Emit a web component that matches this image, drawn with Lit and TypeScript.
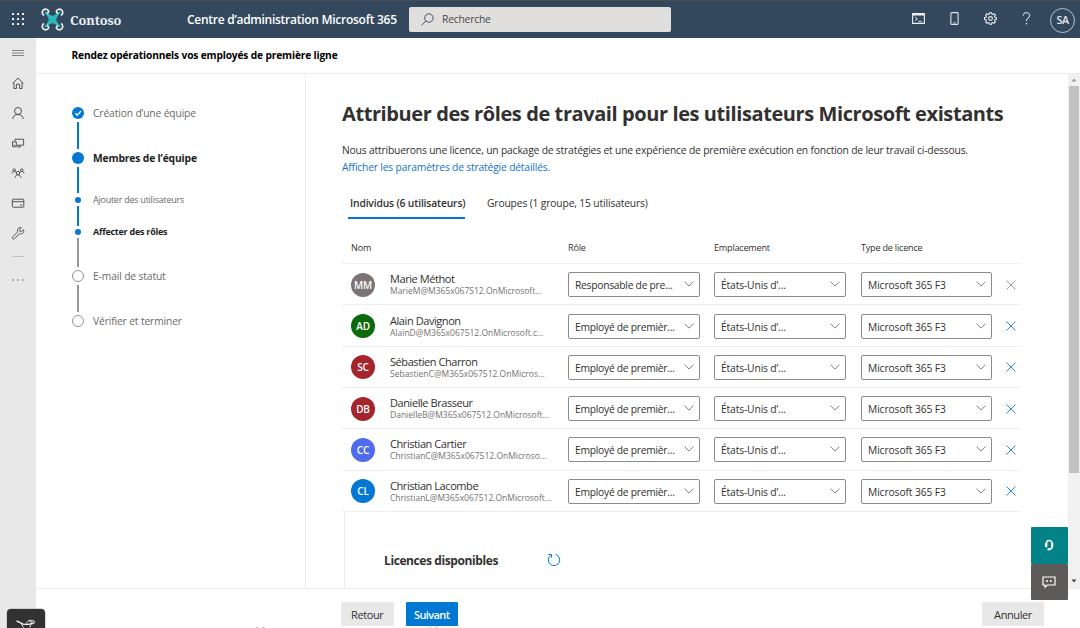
import { LitElement, html, css, svg } from "lit";
import { customElement, property } from "lit/decorators.js";
import { classMap } from "lit/directives/class-map.js";

const chevron = svg`<svg class="chev" viewBox="0 0 10 6" width="10" height="6"><path d="M.5.6 5 5.1 9.5.6" fill="none" stroke="#6b6b6b" stroke-width=".85"/></svg>`;

@customElement("select-box")
class SelectBox extends LitElement {
  @property() label = "";
  static styles = css`
    :host { display: block; }
    .box { box-sizing: border-box; height: 25px; border: 1px solid #8d8b8a; border-radius: 2px; background: #fff;
      display: flex; align-items: center; justify-content: space-between; padding: 1px 5px 0 6px; }
    .label { font-size: 10.3px; color: #323130; white-space: nowrap; letter-spacing: var(--ls, -0.27px); }
    .chev { display: block; margin-top: -2px; flex: none; }
  `;
  render() {
    return html`<div class="box"><span class="label">${this.label}</span>${chevron}</div>`;
  }
}

@customElement("top-bar")
class TopBar extends LitElement {
  static styles = css`
    :host { display: block; }
    .bar { box-sizing: border-box; height: 38px; background: #33485d; border-top: 1px solid #4b4f54; display: flex; align-items: center; color: #fff; padding-right: 5px; }
    .waffle { margin-left: 12px; margin-top: -1px; }
    .logo { margin-left: 17px; }
    svg { display: block; flex: none; }
    .brand { width: 123px; box-sizing: border-box; padding-left: 6px; font-family: "Roboto Slab", "Noto Serif", "DejaVu Serif", serif; font-weight: 700; font-size: 12.8px; color: #e9edf1; letter-spacing: -0.1px; white-space: nowrap; }
    .product { width: 222px; font-size: 12px; font-weight: 600; letter-spacing: -0.27px; white-space: nowrap; }
    .search { box-sizing: border-box; width: 262px; height: 25px; background: #e1dfdd; border-radius: 2px; display: flex; align-items: center; color: #444a50; font-size: 10.3px; letter-spacing: -0.2px; padding-left: 12px; gap: 8px; margin-top: -1px; }
    .actions { margin-left: auto; display: flex; align-items: center; }
    .act { width: 36px; display: flex; justify-content: center; margin-top: -2px; }
    .me { box-sizing: border-box; width: 25px; height: 25px; border: 1px solid #b9c3cc; border-radius: 50%; margin-left: 5.5px; font-size: 10.6px; letter-spacing: -0.3px; font-weight: 600; display: flex; align-items: center; justify-content: center; color: #e6eaee; margin-top: 1px; }
  `;
  render() {
    const dots = [0, 5, 10];
    return html`<header class="bar">
      <svg class="waffle" width="12" height="13" viewBox="0 0 12 13">
        ${dots.map((y) => dots.map((x) => svg`<rect x=${x} y=${y} width="2" height="2" rx=".5" fill="#fff"/>`))}
      </svg>
      <svg class="logo" width="23" height="23" viewBox="0 0 23 23">
        <path d="M3.500 4.500 4.500 3.500 9.200 7Q11.500 8.300 13.800 7L18.500 3.500 19.500 4.500 16 9.200Q14.700 11.500 16 13.800L19.500 18.500 18.500 19.500 13.800 16Q11.500 14.700 9.200 16L4.500 19.500 3.500 18.500 7 13.800Q8.300 11.500 7 9.200Z" fill="#2bb9bd"/>
        <g fill="none" stroke="#e8edf1" stroke-width="1.700">
          <path d="M3 7.400A3.300 3.300 0 1 1 7.600 3.200Q7.700 4.600 6.200 5.600"/>
          <path d="M20 7.400A3.300 3.300 0 1 0 15.400 3.200Q15.300 4.600 16.800 5.600"/>
          <path d="M3 15.600A3.300 3.300 0 1 0 7.600 19.800Q7.700 18.400 6.200 17.400"/>
          <path d="M20 15.600A3.300 3.300 0 1 1 15.400 19.800Q15.300 18.400 16.800 17.400"/>
        </g>
      </svg>
      <span class="brand">Contoso</span>
      <span class="product">Centre d’administration Microsoft 365</span>
      <div class="search">
        <svg width="13" height="13" viewBox="0 0 13 13"><g fill="none" stroke="#41536a" stroke-width="1"><circle cx="7.9" cy="5" r="4.2"/><path d="M4.9 8 .5 12.4"/></g></svg>
        <span>Recherche</span>
      </div>
      <div class="actions">
        <span class="act"><svg width="13" height="11" viewBox="0 0 13 11"><path d="M.6.6H12.4V10.4H.6ZM.6 1.9H12.4" fill="none" stroke="#eef1f3" stroke-width="1.1"/><path d="M3.2 4 5.4 5.8 3.2 7.6M6.5 8.4H9.6" fill="none" stroke="#fff" stroke-width=".9"/></svg></span>
        <span class="act"><svg width="9" height="13" viewBox="0 0 9 13"><rect x=".9" y=".6" width="7.2" height="11.8" rx=".6" fill="none" stroke="#dde4e9" stroke-width="1.1"/><path d="M3.4 10.8H5.6" stroke="#dde4e9"/></svg></span>
        <span class="act"><svg width="13" height="13" viewBox="0 0 13 13"><g fill="none" stroke="#e8edf1" stroke-width="1.100"><path d="M5.5.7h2l.3 1.4 1 .4 1.2-.8 1.4 1.4-.8 1.2.4 1 1.3.2v2l-1.3.2-.4 1 .8 1.2-1.4 1.4-1.2-.8-1 .4-.3 1.4h-2l-.3-1.4-1-.4-1.2.8L1.600 9.900l.8-1.200-.4-1L.6 7.500v-2L2 5.300l.4-1-.8-1.200L3 1.700l1.200.8 1-.4Z"/><circle cx="6.5" cy="6.500" r="1.900"/></g></svg></span>
        <span class="act"><svg width="9" height="13" viewBox="0 0 9 13"><path d="M1.200 3.600C1.200 1.800 2.500.7 4.400.7S7.700 1.800 7.700 3.400C7.700 5.900 4.500 6 4.500 9.200" fill="none" stroke="#fff" stroke-width="1"/><circle cx="4.500" cy="11.700" r=".8" fill="#fff"/></svg></span>
        <span class="me">SA</span>
      </div>
    </header>`;
  }
}

@customElement("nav-rail")
class NavRail extends LitElement {
  static styles = css`
    :host { display: block; }
    .rail { box-sizing: border-box; width: 36px; height: 100%; background: #e8e8e8; display: flex; flex-direction: column; align-items: center; }
    .item { height: 30px; display: flex; align-items: center; justify-content: center; }
    .gap { height: 1px; width: 12px; background: #c4c4c4; margin-top: 8px; }
    .more { padding-top: 7px; }
    svg { display: block; overflow: visible; }
  `;
  render() {
    const icons = [
      svg`<path d="M0 3.500H12M0 6H12M0 8.500H12" stroke="#777" stroke-width=".9"/>`,
      svg`<path d="M.6 6.500 6 1 11.400 6.500M1.900 5.500V11.500H4.400V7.200H7.600V11.500H10.100V5.500"/>`,
      svg`<circle cx="6" cy="4" r="3.500"/><path d="M.7 12C.9 9.200 3 7.500 6 7.500S11.100 9.200 11.300 12"/>`,
      svg`<path d="M3 4V2.200H11.600V8.200H5.200M.5 4.800H4.300V9.700H.5ZM7 8.300V9.800M5.200 9.900H9M1.600 8.300H3.200"/>`,
      svg`<circle cx="6" cy="6" r="1.700"/><circle cx="2.200" cy="3.200" r="1.300"/><circle cx="9.800" cy="3.200" r="1.300"/><path d="M3.100 10.800C3.300 8.600 4.400 7.800 6 7.800S8.700 8.600 8.900 10.800M0 6.500C.2 5 1 4.500 2.200 4.500S4 5 4.300 5.700M12 6.500C11.800 5 11 4.500 9.800 4.500S8 5 7.700 5.700"/>`,
      svg`<rect x=".4" y="2.200" width="11.400" height="8" rx=".8"/><path d="M.4 4.700H11.800M8 8H10.200"/>`,
      svg`<path d="M11.300 2.700 9.500 4.500 7.900 4.200 7.600 2.600 9.300.9C7.700.2 5.900 1 5.500 2.700 5.300 3.500 5.500 4.200 5.700 4.800L.8 9.700C.1 10.400.2 11.300.7 11.700 1.300 12.200 2 12.100 2.600 11.500L7.500 6.700C8.700 7.200 10.200 7 11.100 5.900 11.900 5 12 3.700 11.300 2.700Z"/>`,
    ];
    return html`<nav class="rail">
      ${icons.map((i) => html`<span class="item"><svg width="12" height="13" viewBox="0 0 12 13"><g fill="none" stroke="#4d4b4a" stroke-width=".95">${i}</g></svg></span>`)}
      <span class="gap"></span>
      <span class="item more"><svg width="12" height="4" viewBox="0 0 12 4"><g fill="#555"><circle cx="1.200" cy="3" r=".75"/><circle cx="6" cy="3" r=".75"/><circle cx="10.800" cy="3" r=".75"/></g></svg></span>
    </nav>`;
  }
}

interface Step { text: string; kind: "done" | "current" | "sub" | "todo"; line?: "blue" | "grey"; bold?: boolean; size: string; }

@customElement("step-list")
class StepList extends LitElement {
  static styles = css`
    :host { display: block; }
    .list { list-style: none; margin: 0; padding: 32.500px 0 0 35px; }
    .step { display: flex; gap: 8px; }
    .long { height: 45px; } .mid { height: 41.500px; } .short { height: 32px; } .end { height: 44.500px; }
    .track { width: 14px; display: flex; flex-direction: column; align-items: center; }
    .head { flex: none; width: 14px; height: 14px; display: flex; align-items: center; justify-content: center; }
    .dot { box-sizing: border-box; width: 12px; height: 12px; border-radius: 50%; background: #0078d4; display: block; }
    .todo .dot { background: #fff; border: 1.500px solid #979593; }
    .sub .dot { width: 6px; height: 6px; }
    .line { flex: 1; width: 2px; margin: 2px 0; background: #0078d4; }
    .line.grey { background: #979593; }
    .sub .line { margin: -0.500px 0 -1px; }
    .sub .line.grey { margin-bottom: 2px; }
    .mid .line { margin-bottom: 0; }
    .text { line-height: 14px; font-size: 10.300px; color: #6c6a68; white-space: nowrap; letter-spacing: -0.140px; }
    .bold { color: #201f1e; font-weight: 700; letter-spacing: -0.150px; }
    .sub .text { font-size: 9px; letter-spacing: -0.250px; }
    .tick { display: block; }
  `;
  render() {
    const steps: Step[] = [
      { text: "Création d’une équipe", kind: "done", line: "blue", size: "long" },
      { text: "Membres de l’équipe", kind: "current", line: "blue", bold: true, size: "mid" },
      { text: "Ajouter des utilisateurs", kind: "sub", line: "blue", size: "short" },
      { text: "Affecter des rôles", kind: "sub", line: "grey", bold: true, size: "end" },
      { text: "E-mail de statut", kind: "todo", line: "grey", size: "long" },
      { text: "Vérifier et terminer", kind: "todo", size: "long" },
    ];
    return html`<ol class="list">${steps.map((s) => html`
      <li class=${`step ${s.kind} ${s.size}`}>
        <span class="track">
          <span class="head"><span class="dot">${s.kind === "done" ? svg`<svg class="tick" width="12" height="12" viewBox="0 0 12 12"><path d="M3.200 6.200 5.200 8.200 9 4" fill="none" stroke="#fff" stroke-width="1.300"/></svg>` : ""}</span></span>
          ${s.line ? html`<span class=${`line ${s.line}`}></span>` : ""}
        </span>
        <span class=${classMap({ text: true, bold: !!s.bold })}>${s.text}</span>
      </li>`)}</ol>`;
  }
}

interface User { init: string; tone: string; name: string; mail: string; role: string; }
const users: User[] = [
  { init: "MM", tone: "t1", name: "Marie Méthot", mail: "MarieM@M365x067S12.OnMicrosoft...", role: "Responsable de pre..." },
  { init: "AD", tone: "t2", name: "Alain Davignon", mail: "AlainD@M365x067512.OnMicrosoft.c...", role: "Employé de premièr..." },
  { init: "SC", tone: "t3", name: "Sébastien Charron", mail: "SebastienC@M365x067512.OnMicros...", role: "Employé de premièr..." },
  { init: "DB", tone: "t3", name: "Danielle Brasseur", mail: "DanielleB@M365x067512.OnMicrosoft...", role: "Employé de premièr..." },
  { init: "CC", tone: "t4", name: "Christian Cartier", mail: "ChristianC@M365x067512.OnMicroso...", role: "Employé de premièr..." },
  { init: "CL", tone: "t5", name: "Christian Lacombe", mail: "ChristianL@M365x067512.OnMicrosoft...", role: "Employé de premièr..." },
];

@customElement("user-table")
class UserTable extends LitElement {
  static styles = css`
    :host { display: block; }
    .row, .heads { display: grid; grid-template-columns: 217px 132px 14px 132px 15px 131px 14px 12px; align-items: center; padding-left: 9px; width: 679px; box-sizing: border-box; border-bottom: 1px solid #efeeed; white-space: nowrap; }
    .row { height: 41.300px; padding-top: 1px; }
    .heads { height: 33px; font-size: 9.100px; letter-spacing: -0.220px; color: #323130; border-bottom-color: #f3f2f1; padding-top: 1px; }
    .c2 { grid-column: 2; } .c3 { grid-column: 4; } .c4 { grid-column: 6; }
    .person { display: flex; gap: 15px; align-items: center; }
    .avatar { width: 24px; height: 24px; border-radius: 50%; color: #fff; font-size: 10px; font-weight: 600; letter-spacing: -0.100px; display: flex; align-items: center; justify-content: center; flex: none; }
    .t1 { background: #7a7574; } .t2 { background: #0b6a0b; } .t3 { background: #a4262c; } .t4 { background: #4f6bed; } .t5 { background: #0078d4; }
    .name { font-size: 11px; line-height: 13px; letter-spacing: -0.430px; color: #323130; display: block; }
    .mail { font-size: 8.500px; line-height: 12px; color: #757371; display: block; }
    .x { grid-column: 8; display: block; }
    .row .c3 { --ls: -0.150px; } .row .c4 { --ls: -0.120px; }
  `;
  render() {
    return html`
      <div class="heads"><span>Nom</span><span class="c2">Rôle</span><span class="c3">Emplacement</span><span class="c4">Type de licence</span></div>
      ${users.map((u, i) => html`<div class="row">
        <div class="person"><span class=${`avatar ${u.tone}`}>${u.init}</span>
          <span><span class="name">${u.name}</span><span class="mail">${u.mail}</span></span></div>
        <select-box class="c2" label=${u.role}></select-box>
        <select-box class="c3" label="États-Unis d’..."></select-box>
        <select-box class="c4" label="Microsoft 365 F3"></select-box>
        <svg class="x" width="10" height="10" viewBox="0 0 10 10"><path d="M.5.5 9.500 9.500M9.500.5.5 9.500" stroke=${i === 0 ? "#a19f9d" : "#2f8bdb"} stroke-width="1"/></svg>
      </div>`)}`;
  }
}

@customElement("app-root")
class AppRoot extends LitElement {
  static styles = css`
    :host { display: block; font-family: "Open Sans", "Noto Sans", sans-serif; height: 628px; overflow: hidden; position: relative; background: #fff; }
    .page { display: grid; grid-template-rows: 38px 590px; height: 628px; }
    .below { display: grid; grid-template-columns: 36px 1fr; }
    .main { display: grid; grid-template-rows: 35.500px 515px 39.500px; min-width: 0; }
    .title { box-sizing: border-box; border-bottom: 1px solid #ececec; padding-left: 35.500px; font-weight: 700; font-size: 10.200px; letter-spacing: -0.150px; color: #000; display: flex; align-items: center; white-space: nowrap; }
    .middle { display: grid; grid-template-columns: 270px 1fr 12px; overflow: hidden; border-bottom: 1px solid #ececec; box-sizing: border-box; }
    .steps { border-right: 1px solid #ececec; box-sizing: border-box; }
    .content { padding: 26px 0 0 36px; white-space: nowrap; overflow: hidden; }
    h1 { margin: 0; font-size: 20px; line-height: 27px; letter-spacing: -0.410px; color: #323130; font-weight: 700; }
    p { margin: 15px 0 0; font-size: 10.300px; line-height: 17px; letter-spacing: -0.180px; color: #323130; }
    .link { color: #1374c5; }
    .tabs { display: flex; gap: 22px; margin: 18px 0 12.600px 6px; height: 25px; font-size: 10.300px; letter-spacing: -0.150px; color: #323130; }
    .tab { line-height: 19px; }
    .active { font-weight: 600; border-bottom: 2px solid #0078d4; padding: 0 0 0 2px; width: 115px; height: 23px; }
    .panel { margin-left: 2px; border-left: 1px solid #ececec; height: 100px; padding: 38px 0 0 39px; box-sizing: border-box; display: flex; align-items: flex-start; }
    .panel h2 { margin: 0; font-size: 12px; line-height: 22px; letter-spacing: -0.400px; font-weight: 700; color: #323130; width: 163px; }
    .refresh { margin-top: 3px; }
    .scroll { background: #f1f1f1; display: flex; flex-direction: column; align-items: center; }
    .up { height: 12.500px; display: flex; align-items: center; }
    .thumb { width: 10.500px; height: 387px; background: #c1c1c1; }
    .down { margin-top: auto; height: 13px; display: flex; align-items: center; }
    .foot { display: flex; align-items: flex-start; padding: 13.500px 36px 0 305px; gap: 12px; }
    .btn { box-sizing: border-box; height: 24px; width: 52.500px; border: 0; border-radius: 1px; background: #e8e8e8; color: #323130; font: 400 11px "Open Sans", sans-serif; letter-spacing: -0.400px; padding: 1px 0 0; }
    .primary { background: #0078d4; color: #fff; font-weight: 600; letter-spacing: -0.600px; }
    .cancel { width: 62px; margin-left: auto; }
    .dock { position: absolute; left: 1031px; top: 527px; width: 36.500px; display: flex; flex-direction: column; }
    .help, .chat { height: 36.500px; display: flex; align-items: center; justify-content: center; border-radius: 1px; }
    .help { background: #038387; } .chat { background: #5d5b59; }
    .widget { position: absolute; left: 7px; top: 609px; width: 37.500px; height: 24px; border-radius: 4px; background: #323232; box-shadow: 0 0 0 .5px #a5b5b5; display: flex; justify-content: center; box-sizing: border-box; padding-top: 8px; }
    .marks { position: absolute; top: 626.500px; }
    .m1 { left: 256px; } .m2 { left: 429px; }
    svg { display: block; }
  `;
  render() {
    const marks = svg`<svg width="10" height="2" viewBox="0 0 10 2"><path d="M.5.3 2.500 1.500M6 1.500 8.500.3" stroke="#888" stroke-width=".9"/></svg>`;
    return html`<div class="page">
      <top-bar></top-bar>
      <div class="below">
        <nav-rail></nav-rail>
        <div class="main">
          <div class="title">Rendez opérationnels vos employés de première ligne</div>
          <div class="middle">
            <aside class="steps"><step-list></step-list></aside>
            <main class="content">
              <h1>Attribuer des rôles de travail pour les utilisateurs Microsoft existants</h1>
              <p>Nous attribuerons une licence, un package de stratégies et une expérience de première exécution en fonction de leur travail ci-dessous.<br><span class="link">Afficher les paramètres de stratégie détaillés.</span></p>
              <div class="tabs"><span class="tab active">Individus (6 utilisateurs)</span><span class="tab">Groupes (1 groupe, 15 utilisateurs)</span></div>
              <user-table></user-table>
              <section class="panel"><h2>Licences disponibles</h2>
                <svg class="refresh" width="14" height="14" viewBox="0 0 14 14"><path d="M8.500 1.400A5.700 5.700 0 1 1 3.400 2.500" fill="none" stroke="#0078d4" stroke-width="1"/><path d="M1.300 1.500H4.500V4.600" fill="none" stroke="#0078d4" stroke-width="1"/></svg>
              </section>
            </main>
            <div class="scroll">
              <span class="up"><svg width="6" height="4" viewBox="0 0 6 4"><path d="M3 .5 5.500 3.500H.5Z" fill="#9b9b9b"/></svg></span>
              <span class="thumb"></span>
              <span class="down"><svg width="6" height="4" viewBox="0 0 6 4"><path d="M3 3.500 5.500.5H.5Z" fill="#444"/></svg></span>
            </div>
          </div>
          <footer class="foot"><button class="btn">Retour</button><button class="btn primary">Suivant</button><button class="btn cancel">Annuler</button></footer>
        </div>
      </div>
    </div>
    <div class="dock">
      <span class="help"><svg width="10" height="12" viewBox="0 0 10 12"><path d="M2.400 7.800V4.200A2.800 2.800 0 0 1 8 4.200V7.800C8 9.700 6.800 10.300 5 10.400" fill="none" stroke="#fff" stroke-width="1.500"/><path d="M.9 4H3.200V8.300H1.700Q.9 8.300.9 7.300ZM7 4H9.300V7.300Q9.300 8.300 8.500 8.300H7Z" fill="#fff"/><circle cx="4.700" cy="10.300" r="1.200" fill="#fff"/></svg></span>
      <span class="chat"><svg width="14" height="12" viewBox="0 0 14 12"><path d="M1 1H13V9H5.300L3 11.200V9H1Z" fill="none" stroke="#fff" stroke-width="1.200"/><g fill="#fff"><circle cx="5" cy="5" r="1"/><circle cx="8.800" cy="5" r="1"/></g></svg></span>
    </div>
    <div class="widget"><svg width="22" height="14" viewBox="0 0 22 14"><path d="M1.500 3.800 8 7.200 12.500 7.400Q16 7.500 18 5.500" fill="none" stroke="#fff" stroke-width="1.300"/><path d="M6.500 7 8.500 10.500M11 6.800 14 3.200 19 3.800 19.500 6 15.500 7.500 15 10.500M14 3.500 17 5.500" fill="none" stroke="#ddd" stroke-width="1"/></svg></div>
    <span class="marks m1">${marks}</span><span class="marks m2">${marks}</span>`;
  }
}
